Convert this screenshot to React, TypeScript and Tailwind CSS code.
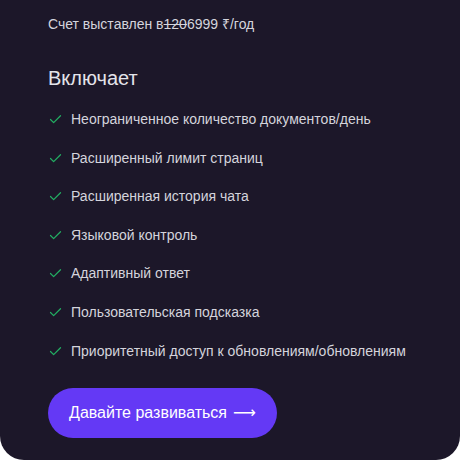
import { Check } from "lucide-react";

const features = [
  "Неограниченное количество документов/день",
  "Расширенный лимит страниц",
  "Расширенная история чата",
  "Языковой контроль",
  "Адаптивный ответ",
  "Пользовательская подсказка",
  "Приоритетный доступ к обновлениям/обновлениям",
];

export default function App() {
  return (
    <div className="h-[460px] w-[460px] bg-white font-['Liberation_Sans',Arial,sans-serif]">
      <div className="flex h-full flex-col rounded-b-[24px] bg-[#1c1729] px-12 pt-[15px] text-[#d4d4dc]">
        <div className="text-[14px] leading-[18px]">
          Счет выставлен в<s>120</s>6999 ₹/год
        </div>

        <div className="mt-[33px] text-[20px] leading-[24px] text-[#e4e4ea]">Включает</div>

        <ul className="mt-[21px] flex flex-col gap-[21.6px]">
          {features.map((f) => (
            <li key={f} className="flex items-center gap-[8px] text-[14px] leading-[17px]">
              <Check className="h-[15px] w-[15px] shrink-0 text-[#22ad62]" strokeWidth={2} />
              <span>{f}</span>
            </li>
          ))}
        </ul>

        <button
          type="button"
          className="mt-[28px] flex h-[50px] w-[229px] items-center justify-center rounded-full bg-[#6439f5] text-[16px] text-white"
        >
          Давайте развиваться{" "}
          <span className="ml-[6px] font-['DejaVu_Sans',sans-serif]">⟶</span>
        </button>
      </div>
    </div>
  );
}
